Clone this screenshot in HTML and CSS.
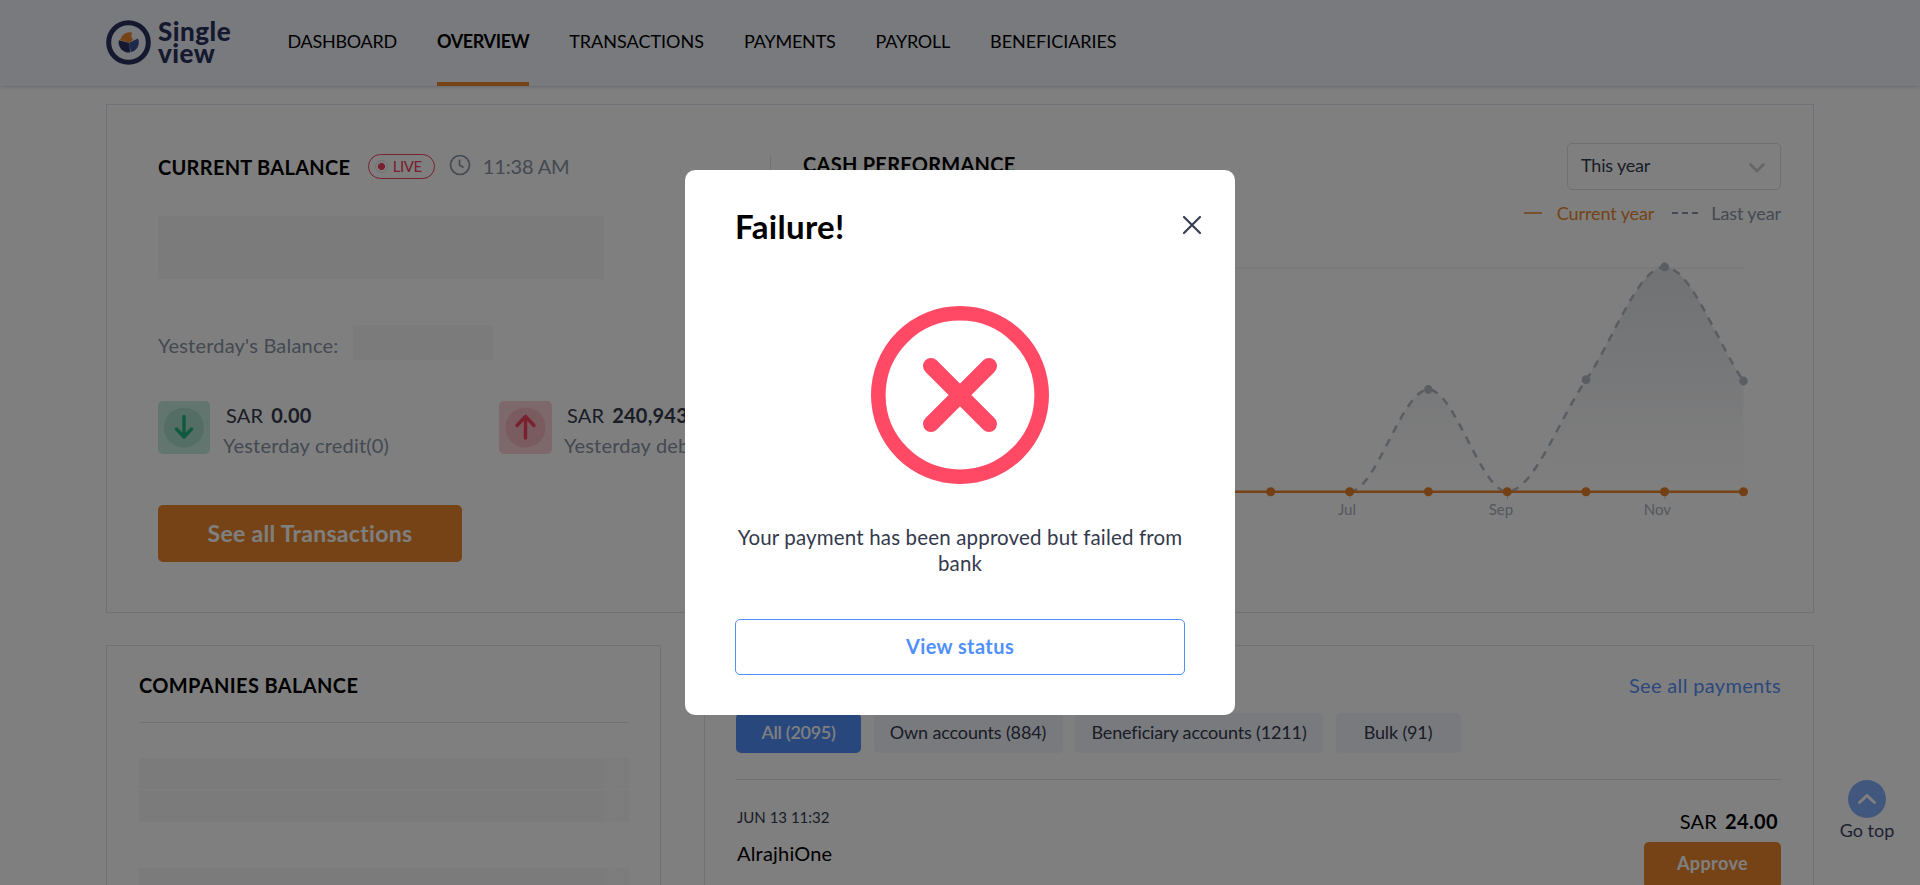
FILE: index.html
```html
<!DOCTYPE html>
<html lang="en">
<head>
<meta charset="utf-8">
<title>Single view</title>
<link rel="stylesheet" href="styles.css">
</head>
<body>
<header class="header">
  <div class="logo">
    <svg class="logo-mark" viewBox="0 0 45 45">
      <circle cx="22.5" cy="22.5" r="19.8" fill="none" stroke="#2b3360" stroke-width="5"/>
      <path d="M23.500 23 L12.900 20.200 A10 10 0 0 0 24 32.400 Z" fill="#2b3360"/>
      <path d="M23.500 22.500 L32 18.600 A10 10 0 0 1 24.600 32.300 Z" fill="#3a5596"/>
      <path d="M23.500 22.800 L14 20 A10 10 0 0 1 26 12.600 L25.200 16.500 L27 19.600 Z" fill="#ea862c"/>
    </svg>
    <div class="logo-text"><span>Single</span><span class="logo-view">view</span></div>
  </div>
  <nav class="nav">
    <a class="n1">DASHBOARD</a>
    <a class="n2 active">OVERVIEW</a>
    <a class="n3">TRANSACTIONS</a>
    <a class="n4">PAYMENTS</a>
    <a class="n5">PAYROLL</a>
    <a class="n6">BENEFICIARIES</a>
  </nav>
</header>

<main class="page">
  <section class="card overview">
    <div class="balance">
      <div class="balance-head">
        <h2 class="title cb">CURRENT BALANCE</h2>
        <span class="live"><i class="live-dot"></i><span class="live-text">LIVE</span></span>
        <svg class="clock" viewBox="0 0 22 22"><circle cx="11" cy="11" r="9.500"/><path d="M10.500 5.500V11L14.500 13.500"/></svg>
        <span class="time">11:38 AM</span>
      </div>
      <div class="skeleton amount"></div>
      <div class="yesterday"><span class="muted yb">Yesterday's Balance:</span><div class="skeleton small"></div></div>
      <div class="flows">
        <div class="flow">
          <svg class="flow-icon" viewBox="0 0 53 53"><rect width="52" height="53" rx="5" fill="#c6ebdf"/><circle cx="26" cy="26.500" r="20" fill="#a9dccb"/><path d="M26 15.500V36M18.500 28l7.500 8 7.500-8" fill="none" stroke="#22b27c" stroke-width="3.400" stroke-linecap="round" stroke-linejoin="round"/></svg>
          <div class="flow-text">
            <div class="sum"><span class="sar">SAR</span><b>0.00</b></div>
            <div class="muted yc">Yesterday credit(0)</div>
          </div>
        </div>
        <div class="flow">
          <svg class="flow-icon" viewBox="0 0 53 53"><rect width="53" height="53" rx="5" fill="#fbd2d8"/><circle cx="26.500" cy="26.500" r="20" fill="#f5b6c0"/><path d="M26.500 37V15.500M18 24.500l8.500-9 8.500 9" fill="none" stroke="#f4425f" stroke-width="3.400" stroke-linecap="round" stroke-linejoin="round"/></svg>
          <div class="flow-text">
            <div class="sum"><span class="sar">SAR</span><b>240,943</b></div>
            <div class="muted yc">Yesterday deb</div>
          </div>
        </div>
      </div>
      <a class="btn see-all">See all Transactions</a>
    </div>
    <div class="cash">
      <div class="cash-head">
        <h2 class="title cp">CASH PERFORMANCE</h2>
        <div class="select"><span class="ty">This year</span><svg class="chev" viewBox="0 0 16 10"><path d="M1.500 1.500L8 8l6.500-6.500"/></svg></div>
      </div>
      <div class="legend">
        <svg class="key-current" viewBox="0 0 18 2"><path d="M0 1H18"/></svg><span class="current">Current year</span>
        <svg class="key-last" viewBox="0 0 26 2"><path d="M0 1H26"/></svg><span class="last">Last year</span>
      </div>
      <svg class="chart" viewBox="803 260 978 265">
        <defs><linearGradient id="fade" x1="0" y1="267" x2="0" y2="491" gradientUnits="userSpaceOnUse"><stop offset="0" stop-color="#8a95a6" stop-opacity=".26"/><stop offset="1" stop-color="#8a95a6" stop-opacity="0"/></linearGradient></defs>
        <path d="M820 268H1743.500" stroke="#f0f0f0" stroke-width="1.500"/>
        <g stroke="#ccd0d6"><path d="M1350 491V499M1507.500 491V499M1665 491V499"/></g>
        <path fill="url(#fade)" d="M1349.700 491.500C1376 491.500 1402 389.500 1428.400 389.500S1481 491.500 1507.200 491.500C1533.500 491.500 1559.600 418 1586 380C1612 343 1638 267 1664.600 267C1691 267 1717 343 1743.500 381V491.500Z"/>
        <path class="last-line" d="M1349.700 491.500C1376 491.500 1402 389.500 1428.400 389.500S1481 491.500 1507.200 491.500C1533.500 491.500 1559.600 418 1586 380C1612 343 1638 267 1664.600 267C1691 267 1717 343 1743.500 381"/>
        <g fill="#b4bbc5"><circle cx="1428.400" cy="389.500" r="4.400"/><circle cx="1586" cy="379.700" r="4.400"/><circle cx="1664.600" cy="267" r="4.400"/><circle cx="1743.500" cy="381" r="4.400"/></g>
        <path d="M840 491.800H1743.500" stroke="#ea862c" stroke-width="2.600"/>
        <g fill="#e6802a"><circle cx="1270.700" cy="491.700" r="4.500"/><circle cx="1349.700" cy="491.700" r="4.500"/><circle cx="1428.400" cy="491.700" r="4.500"/><circle cx="1507.200" cy="491.700" r="4.500"/><circle cx="1586" cy="491.700" r="4.500"/><circle cx="1664.600" cy="491.700" r="4.500"/><circle cx="1743.500" cy="491.700" r="4.500"/></g>
        <g class="months"><text x="1347" y="515">Jul</text><text x="1501" y="515">Sep</text><text x="1657.500" y="515">Nov</text></g>
      </svg>
    </div>
  </section>

  <div class="row">
    <section class="card companies">
      <h2 class="title co">COMPANIES BALANCE</h2>
      <div class="skeleton strip"></div>
      <div class="skeleton strip second"></div>
      <div class="skeleton strip"></div>
    </section>
    <section class="card payments">
      <div class="pay-head"><a class="link">See all payments</a></div>
      <div class="tabs">
        <span class="tab t1">All (2095)</span>
        <span class="tab t2">Own accounts (884)</span>
        <span class="tab t3">Beneficiary accounts (1211)</span>
        <span class="tab t4">Bulk (91)</span>
      </div>
      <div class="payment">
        <div class="pay-info"><span class="date">JUN 13 11:32</span><span class="name">AlrajhiOne</span></div>
        <div class="pay-side"><div class="pay-sum"><span class="sar">SAR</span><b>24.00</b></div><a class="btn approve">Approve</a></div>
      </div>
    </section>
  </div>
</main>

<div class="go-top">
  <svg class="go-icon" viewBox="0 0 38 38"><circle cx="19" cy="19" r="19" fill="#85aefc"/><path d="M11.500 22.500L19 15.500l7.500 7" fill="none" stroke="#fff" stroke-width="3" stroke-linecap="round" stroke-linejoin="round"/></svg>
  <span class="gt">Go top</span>
</div>

<div class="backdrop">
  <div class="modal">
    <div class="modal-head">
      <h1 class="failure">Failure!</h1>
      <svg class="close" viewBox="0 0 20 20"><path d="M2 2L18 18M18 2L2 18"/></svg>
    </div>
    <svg class="fail-icon" viewBox="0 0 178 178"><circle cx="89" cy="89" r="81.700" fill="none" stroke="#ff4965" stroke-width="14.600"/><path d="M60 60L118 118M118 60L60 118" stroke="#ff4965" stroke-width="16" stroke-linecap="round"/></svg>
    <p class="message">Your payment has been approved but failed from bank</p>
    <a class="status"><span>View status</span></a>
  </div>
</div>
</body>
</html>
```
FILE: styles.css
```css
* { box-sizing: border-box; }
body { margin: 0; height: 885px; overflow: hidden; background: #fff; color: #343a4c; font-family: Lato, "Open Sans", sans-serif; font-size: 20px; line-height: 24px; white-space: nowrap; font-variant-ligatures: none; }
h1, h2, p { margin: 0; }
b { font-weight: 700; }

.header { display: flex; height: 86px; padding-left: 106px; background: #f2f4fb; box-shadow: 0 1px 4px rgba(60, 70, 110, .25); }
.logo { display: flex; align-items: center; gap: 7px; width: 181.500px; height: 84px; }
.logo-mark { width: 45px; height: 45px; }
.logo-text { display: flex; flex-direction: column; color: #2b3360; font-weight: 900; font-size: 26px; line-height: 22px; letter-spacing: .5px; }
.nav { display: flex; gap: 40px; }
.nav a { height: 86px; border-bottom: 4px solid transparent; font-size: 18px; line-height: 82px; letter-spacing: -.22px; color: #000; }
.nav .n1 { letter-spacing: -.27px; }
.nav .n2 { letter-spacing: -.38px; }
.nav .n3 { letter-spacing: 0; }
.nav .n6 { letter-spacing: -.05px; }
.nav .active { border-color: #ea862c; font-weight: 700; }

.page { height: 799px; padding: 18px 106px 0; overflow: hidden; }
.card { border: 1px solid #dfe2ec; background: #fff; }
.title { font-size: 20px; line-height: 24px; font-weight: 700; letter-spacing: .27px; color: #000; }
.muted { color: #8893a4; letter-spacing: .2px; }
.skeleton { background: #f6f6f6; }

.overview { display: flex; height: 509px; padding: 38px 32px 0 51px; }
.balance { width: 612px; padding-top: 11px; }
.balance-head { display: flex; height: 24px; align-items: center; }
.cb { padding-top: 1px; }
.live { display: flex; align-items: center; width: 67px; height: 25px; margin-left: 17.500px; padding-left: 6px; border: 1.500px solid #ee405c; border-radius: 13px; color: #ee405c; font-size: 15px; letter-spacing: -.4px; }
.live-dot { width: 13px; height: 13px; margin-right: 5px; border: 1px solid #eadfe3; border-radius: 50%; background: radial-gradient(circle, #ee405c 3.200px, transparent 3.800px); }
.clock { width: 22px; height: 22px; margin: -2px 12px 0 14px; fill: none; stroke: #8893a4; stroke-width: 1.700; }
.time { color: #8893a4; letter-spacing: -.15px; }
.amount { width: 446px; height: 63px; margin-top: 38px; }
.yesterday { display: flex; align-items: center; height: 35px; margin-top: 46px; }
.yesterday .muted { width: 195px; padding-top: 5px; }
.small { width: 140px; height: 35px; }
.flows { display: flex; height: 53px; margin-top: 41px; }
.flow { display: flex; flex: none; gap: 12px; width: 341px; }
.flow + .flow { width: 250px; }
.flow-icon { width: 53px; height: 53px; }
.flow-text { padding-top: 1px; }
.sum { display: flex; gap: 8px; padding: 1px 0 0 3px; height: 31px; letter-spacing: .2px; }
.btn { display: block; border-radius: 5px; background: #ea862c; color: #fff; font-weight: 700; text-align: center; }
.see-all { width: 304px; height: 57px; margin-top: 51px; font-size: 23px; line-height: 56px; letter-spacing: .3px; }

.cash { flex: 1; }
.cash-head { display: flex; justify-content: space-between; height: 47px; padding-left: 33px; background: linear-gradient(#dfe2ec, #dfe2ec) 0 12px / 1px 40px no-repeat; }
.cp { padding-top: 9px; }
.select { display: flex; align-items: center; justify-content: space-between; width: 214px; height: 47px; padding: 0 15px 4px 13px; border: 1px solid #dcdfe6; border-radius: 5px; font-size: 18px; letter-spacing: -.18px; }
.chev { width: 16px; height: 10px; margin-top: 6px; fill: none; stroke: #c8ccd0; stroke-width: 2.800; stroke-linecap: round; }
.legend { display: flex; justify-content: flex-end; align-items: center; height: 24px; margin-top: 11px; font-size: 18px; letter-spacing: -.1px; color: #8893a4; }
.key-current { width: 18px; height: 2px; margin-right: 15px; stroke: #ea862c; stroke-width: 1.500; }
.current { margin-right: 18px; color: #ea862c; }
.key-last { width: 26px; height: 2px; margin-right: 13px; stroke: #8893a4; stroke-width: 2; stroke-dasharray: 6 4; }
.chart { display: block; width: 978px; height: 265px; margin: 35px 0 0 33px; }
.last-line { fill: none; stroke: #b3bac4; stroke-width: 2.500; stroke-dasharray: 8 7; }
.months text { font-size: 15px; fill: #a9b0ba; text-anchor: middle; }

.row { display: flex; justify-content: space-between; height: 240px; margin-top: 32px; overflow: hidden; }
.row .card { height: 240px; border-bottom: 0; overflow: hidden; }
.companies { width: 555px; padding: 27px 31px 0 32px; }
.companies .title { height: 50px; margin-bottom: 35px; border-bottom: 1px solid #dfe2ec; letter-spacing: .36px; }
.strip { height: 31px; margin-bottom: 1px; background: linear-gradient(90deg, #f6f6f6 460px, #fbfbfb 472px, #f7f7f7); }
.second { height: 32px; margin-bottom: 46px; }
.payments { width: 1110px; padding: 27px 32px 0 31px; }
.pay-head { text-align: right; height: 40px; }
.link { color: #5890f8; letter-spacing: .34px; }
.tabs { display: flex; gap: 12.500px; height: 67px; border-bottom: 1px solid #dedede; font-size: 18px; line-height: 39px; letter-spacing: -.15px; text-align: center; }
.tab { height: 40px; border-radius: 5px; background: #f2f4fc; }
.t1 { width: 125px; background: #5190fa; color: #fff; font-weight: 600; letter-spacing: -.3px; }
.t2 { width: 189px; }
.t3 { width: 248px; }
.t4 { width: 125px; }
.payment { display: flex; justify-content: space-between; padding: 29px 0 0 1px; }
.pay-info { display: flex; flex-direction: column; gap: 12px; margin-top: -4px; }
.date { font-size: 15px; }
.name { color: #000; letter-spacing: .2px; }
.pay-side { width: 137px; }
.pay-sum { display: flex; justify-content: flex-end; gap: 8px; height: 33px; padding-right: 3px; color: #000; letter-spacing: .2px; }
.pay-sum b { letter-spacing: .35px; }
.approve { height: 46px; font-size: 18px; line-height: 42px; letter-spacing: .4px; }

.go-top { position: absolute; left: 1826px; top: 780px; width: 82px; display: flex; flex-direction: column; align-items: center; font-size: 18px; color: #3d4266; }
.go-icon { width: 38px; height: 38px; }

.backdrop { position: absolute; inset: 0; display: flex; align-items: center; justify-content: center; background: rgba(0, 0, 0, .5); }
.modal { display: flex; flex-direction: column; align-items: center; width: 550px; height: 545px; padding: 36px 50px 0; border-radius: 10px; background: #fff; }
.modal-head { display: flex; justify-content: space-between; width: 100%; height: 99px; }
.failure { font-size: 33px; line-height: 40px; font-weight: 700; letter-spacing: .3px; color: #000; }
.close { width: 20px; height: 20px; margin: 9px -17px 0 0; stroke: #363f52; stroke-width: 2.200; stroke-linecap: round; }
.fail-icon { width: 178px; height: 178px; margin-top: .5px; }
.message { width: 460px; margin-top: 40px; font-size: 20.500px; line-height: 26px; letter-spacing: .16px; text-align: center; white-space: normal; }
.status { width: 450px; height: 56px; margin-top: 43px; border: 1px solid #5190fa; border-radius: 5px; color: #5190fa; font-weight: 700; line-height: 53px; letter-spacing: .4px; text-align: center; }
```
